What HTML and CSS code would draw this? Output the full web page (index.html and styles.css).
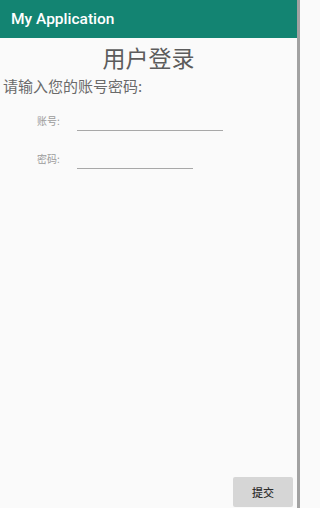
FILE: index.html
```html
<!DOCTYPE html>
<html>
<head>
<meta charset="utf-8">
<link rel="stylesheet" href="styles.css">
</head>
<body>
<div class="screen">
  <div class="main">
    <div class="appbar">My Application</div>
    <div class="content">
      <div class="title">用户登录</div>
      <div class="prompt">请输入您的账号密码:</div>
      <div class="row row-first">
        <span class="label">账号:</span>
        <span class="field field-user"></span>
      </div>
      <div class="row">
        <span class="label">密码:</span>
        <span class="field field-pass"></span>
      </div>
      <div class="actions">
        <button class="submit">提交</button>
      </div>
    </div>
  </div>
  <div class="scrollbar"></div>
</div>
</body>
</html>
```
FILE: styles.css
```css
html, body {
  margin: 0;
  padding: 0;
}
body {
  font-family: "Noto Sans CJK SC", "Noto Sans", sans-serif;
  background: #fafafa;
}
.screen {
  display: grid;
  grid-template-columns: 297px 3px;
  width: 300px;
  height: 508px;
}
.main {
  display: flex;
  flex-direction: column;
  min-height: 0;
}
.scrollbar {
  background: #a2a2a2;
}
.appbar {
  height: 38px;
  background: #138472;
  color: #ffffff;
  font-family: Roboto, "Noto Sans", sans-serif;
  font-weight: 500;
  font-size: 15.5px;
  line-height: 38px;
  padding-left: 11px;
  box-sizing: border-box;
  padding-bottom: 1px;
}
.content {
  flex: 1;
  display: flex;
  flex-direction: column;
}
.title {
  text-align: center;
  font-size: 23px;
  line-height: 28px;
  color: #5c5c5c;
  margin-top: 5px;
}
.prompt {
  font-size: 15px;
  line-height: 20px;
  color: #6a6a6a;
  padding-left: 3px;
  margin-top: 5px;
}
.row {
  display: flex;
  align-items: flex-end;
  padding-left: 37px;
  margin-top: 21px;
}
.row-first {
  margin-top: 18px;
}
.label {
  font-size: 10px;
  line-height: 14px;
  color: #9a9a9a;
  width: 40px;
  padding-bottom: 3px;
}
.field {
  display: block;
  height: 1px;
  border-bottom: 1px solid #a8a8a8;
}
.field-user {
  width: 146px;
}
.field-pass {
  width: 116px;
}
.actions {
  margin-top: auto;
  display: flex;
  justify-content: flex-end;
  padding-right: 4px;
  padding-bottom: 1px;
}
.submit {
  width: 60px;
  height: 30px;
  border: none;
  border-radius: 2px;
  background: #d6d6d6;
  color: #2e2e2e;
  font-family: "Noto Sans CJK SC", sans-serif;
  font-weight: 500;
  font-size: 11px;
  padding: 0;
}
```
